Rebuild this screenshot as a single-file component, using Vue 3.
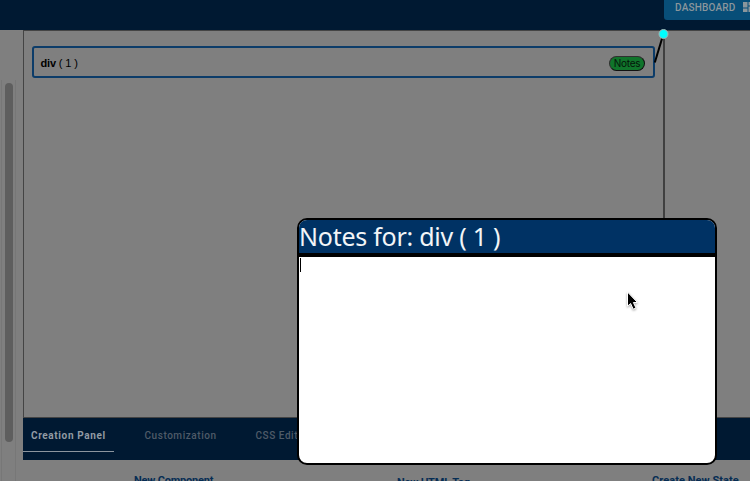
<script setup>
import { ref } from 'vue'

const tabs = ['Creation Panel', 'Customization', 'CSS Editor']
const active = ref(0)
const component = 'div ( 1 )'
</script>

<template>
  <div class="app">
    <header class="topbar">
      <button class="dashboard">
        <span>DASHBOARD</span>
        <svg width="12" height="12" viewBox="0 0 12 12" fill="#8b969c">
          <path d="M0 0h4.5v5.5H0zM5.5 0h4.5v3.5H5.5zM0 6.5h4.5v3.5H0zM5.5 4.5h4.5v5.5H5.5z" />
        </svg>
      </button>
    </header>

    <div class="workspace">
      <aside class="sidebar">
        <div class="track"><div class="thumb"></div></div>
      </aside>
      <main class="main">
        <section class="canvas">
          <div class="stage">
            <div class="node">
              <span class="name"><b>div</b> ( 1 )</span>
              <button class="notes">Notes</button>
            </div>
          </div>
        </section>
        <nav class="tabs">
          <button
            v-for="(tab, i) in tabs"
            :key="tab"
            class="tab"
            :class="{ active: i === active }"
            @click="active = i"
          >{{ tab }}</button>
        </nav>
        <section class="panel">
          <h4 class="component">New Component</h4>
          <h4 class="html">New HTML Tag</h4>
          <h4 class="state">Create New State</h4>
        </section>
      </main>
    </div>

    <svg class="connector" width="20" height="45" viewBox="0 0 20 45">
      <path d="M4.8 34.5L12.5 9" stroke="#000" stroke-width="2" />
      <circle cx="13.5" cy="6" r="4.5" fill="#00ffff" stroke="#a6b4b4" stroke-width="1" />
    </svg>

    <div class="dialog">
      <div class="title">Notes for: {{ component }}</div>
      <div class="editor"><span class="caret"></span></div>
    </div>

    <svg class="cursor" width="16" height="22" viewBox="0 0 16 22">
      <path d="M2.5 1V15.2L5.6 12.5L8.2 18.2L11 17L8.4 11.5H12.5Z" fill="#000" stroke="#fff" stroke-width="1" />
    </svg>
  </div>
</template>

<style>
body {
  margin: 0;
}
</style>

<style scoped>
.app {
  position: relative;
  display: flex;
  flex-direction: column;
  width: 750px;
  height: 481px;
  overflow: hidden;
  background: #7f7f7f;
  font-family: "Liberation Sans", Arial, sans-serif;
}
button {
  font: inherit;
  border: 0;
  padding: 0;
  background: none;
  white-space: nowrap;
}
.topbar {
  box-sizing: border-box;
  flex: none;
  display: flex;
  justify-content: flex-end;
  height: 30px;
  background: #001932;
}
.dashboard {
  box-sizing: border-box;
  display: flex;
  align-items: flex-start;
  gap: 7px;
  width: 86px;
  height: 20px;
  padding: 2px 0 0 11px;
  overflow: hidden;
  border-radius: 0 0 0 3px;
  background: #084e78;
  color: #8b969c;
  font: 500 10px/12px Roboto, sans-serif;
  letter-spacing: 0.2px;
}
.dashboard svg {
  flex: none;
}
.workspace {
  flex: 1;
  display: flex;
  min-height: 0;
}
.sidebar {
  box-sizing: border-box;
  flex: none;
  width: 23px;
  padding: 50px 0 0 1px;
}
.track {
  box-sizing: border-box;
  width: 15px;
  height: 401px;
  padding: 3px 0 0 3px;
  border: solid #777;
  border-width: 0 1px;
}
.thumb {
  width: 8px;
  height: 359px;
  border-radius: 4px;
  background: #5e5e5e;
}
.main {
  flex: 1;
  display: flex;
  flex-direction: column;
  min-width: 0;
}
.canvas {
  box-sizing: border-box;
  flex: none;
  height: 388px;
  border: solid #444;
  border-width: 1px 0 1px 1px;
}
.stage {
  box-sizing: border-box;
  width: 641px;
  height: 386px;
  padding: 15px 8px 0;
  border-right: 2px solid #404040;
}
.node {
  box-sizing: border-box;
  display: flex;
  align-items: center;
  justify-content: space-between;
  width: 623px;
  height: 32px;
  padding: 2px 8px 0 6.5px;
  border: 2px solid #0c3c69;
  border-radius: 3px;
}
.name {
  color: #000;
  font-size: 11px;
  line-height: 13px;
  letter-spacing: -0.15px;
}
.notes {
  box-sizing: border-box;
  width: 36px;
  height: 15px;
  border: 1px solid;
  border-color: #303030 #111 #111 #303030;
  border-radius: 8px;
  background: #10742b;
  color: #04140a;
  font: 10px/13px Inter, sans-serif;
  letter-spacing: -0.3px;
}
.tabs {
  flex: none;
  display: flex;
  align-items: flex-start;
  height: 42px;
  background: #001932;
}
.tab {
  box-sizing: border-box;
  height: 34px;
  padding: 1px 0 0 30.5px;
  border-bottom: 1px solid transparent;
  color: #4f5b68;
  font: 500 10px/34px Roboto, sans-serif;
  letter-spacing: 0.55px;
  text-align: left;
}
.tab:first-child {
  width: 91px;
  padding-left: 8px;
}
.tab:nth-child(2) {
  width: 111px;
}
.tab.active {
  border-color: #8c959e;
  color: #929ba3;
  font-weight: 700;
  letter-spacing: 0.62px;
}
.panel {
  flex: 1;
  display: flex;
  min-height: 0;
  padding: 14px 0 0 111px;
}
.panel h4 {
  flex: none;
  margin: 0;
  color: #062d54;
  font: 700 11px/13px Roboto, sans-serif;
  letter-spacing: -0.2px;
  white-space: nowrap;
}
.panel .component {
  width: 263px;
}
.panel .html {
  width: 255px;
  padding-top: 2px;
}
.panel .state {
  letter-spacing: 0.05px;
}
.connector {
  position: absolute;
  left: 650px;
  top: 28px;
}
.dialog {
  position: absolute;
  left: 297px;
  top: 218px;
  box-sizing: border-box;
  display: flex;
  flex-direction: column;
  width: 420px;
  height: 247px;
  overflow: hidden;
  border: 2px solid #000;
  border-radius: 10px;
  background: #fff;
}
.title {
  box-sizing: border-box;
  flex: none;
  height: 37px;
  border-bottom: 4px solid #000;
  background: #003264;
  color: #f2f5f7;
  font: 25px/32px "Noto Sans", "Open Sans", sans-serif;
  letter-spacing: -0.25px;
  white-space: nowrap;
}
.editor {
  flex: 1;
  padding: 1px;
}
.caret {
  display: block;
  width: 1px;
  height: 14px;
  background: #000;
}
.cursor {
  position: absolute;
  left: 625px;
  top: 291px;
  filter: drop-shadow(0 1px 1px rgba(0, 0, 0, 0.35));
}
</style>
